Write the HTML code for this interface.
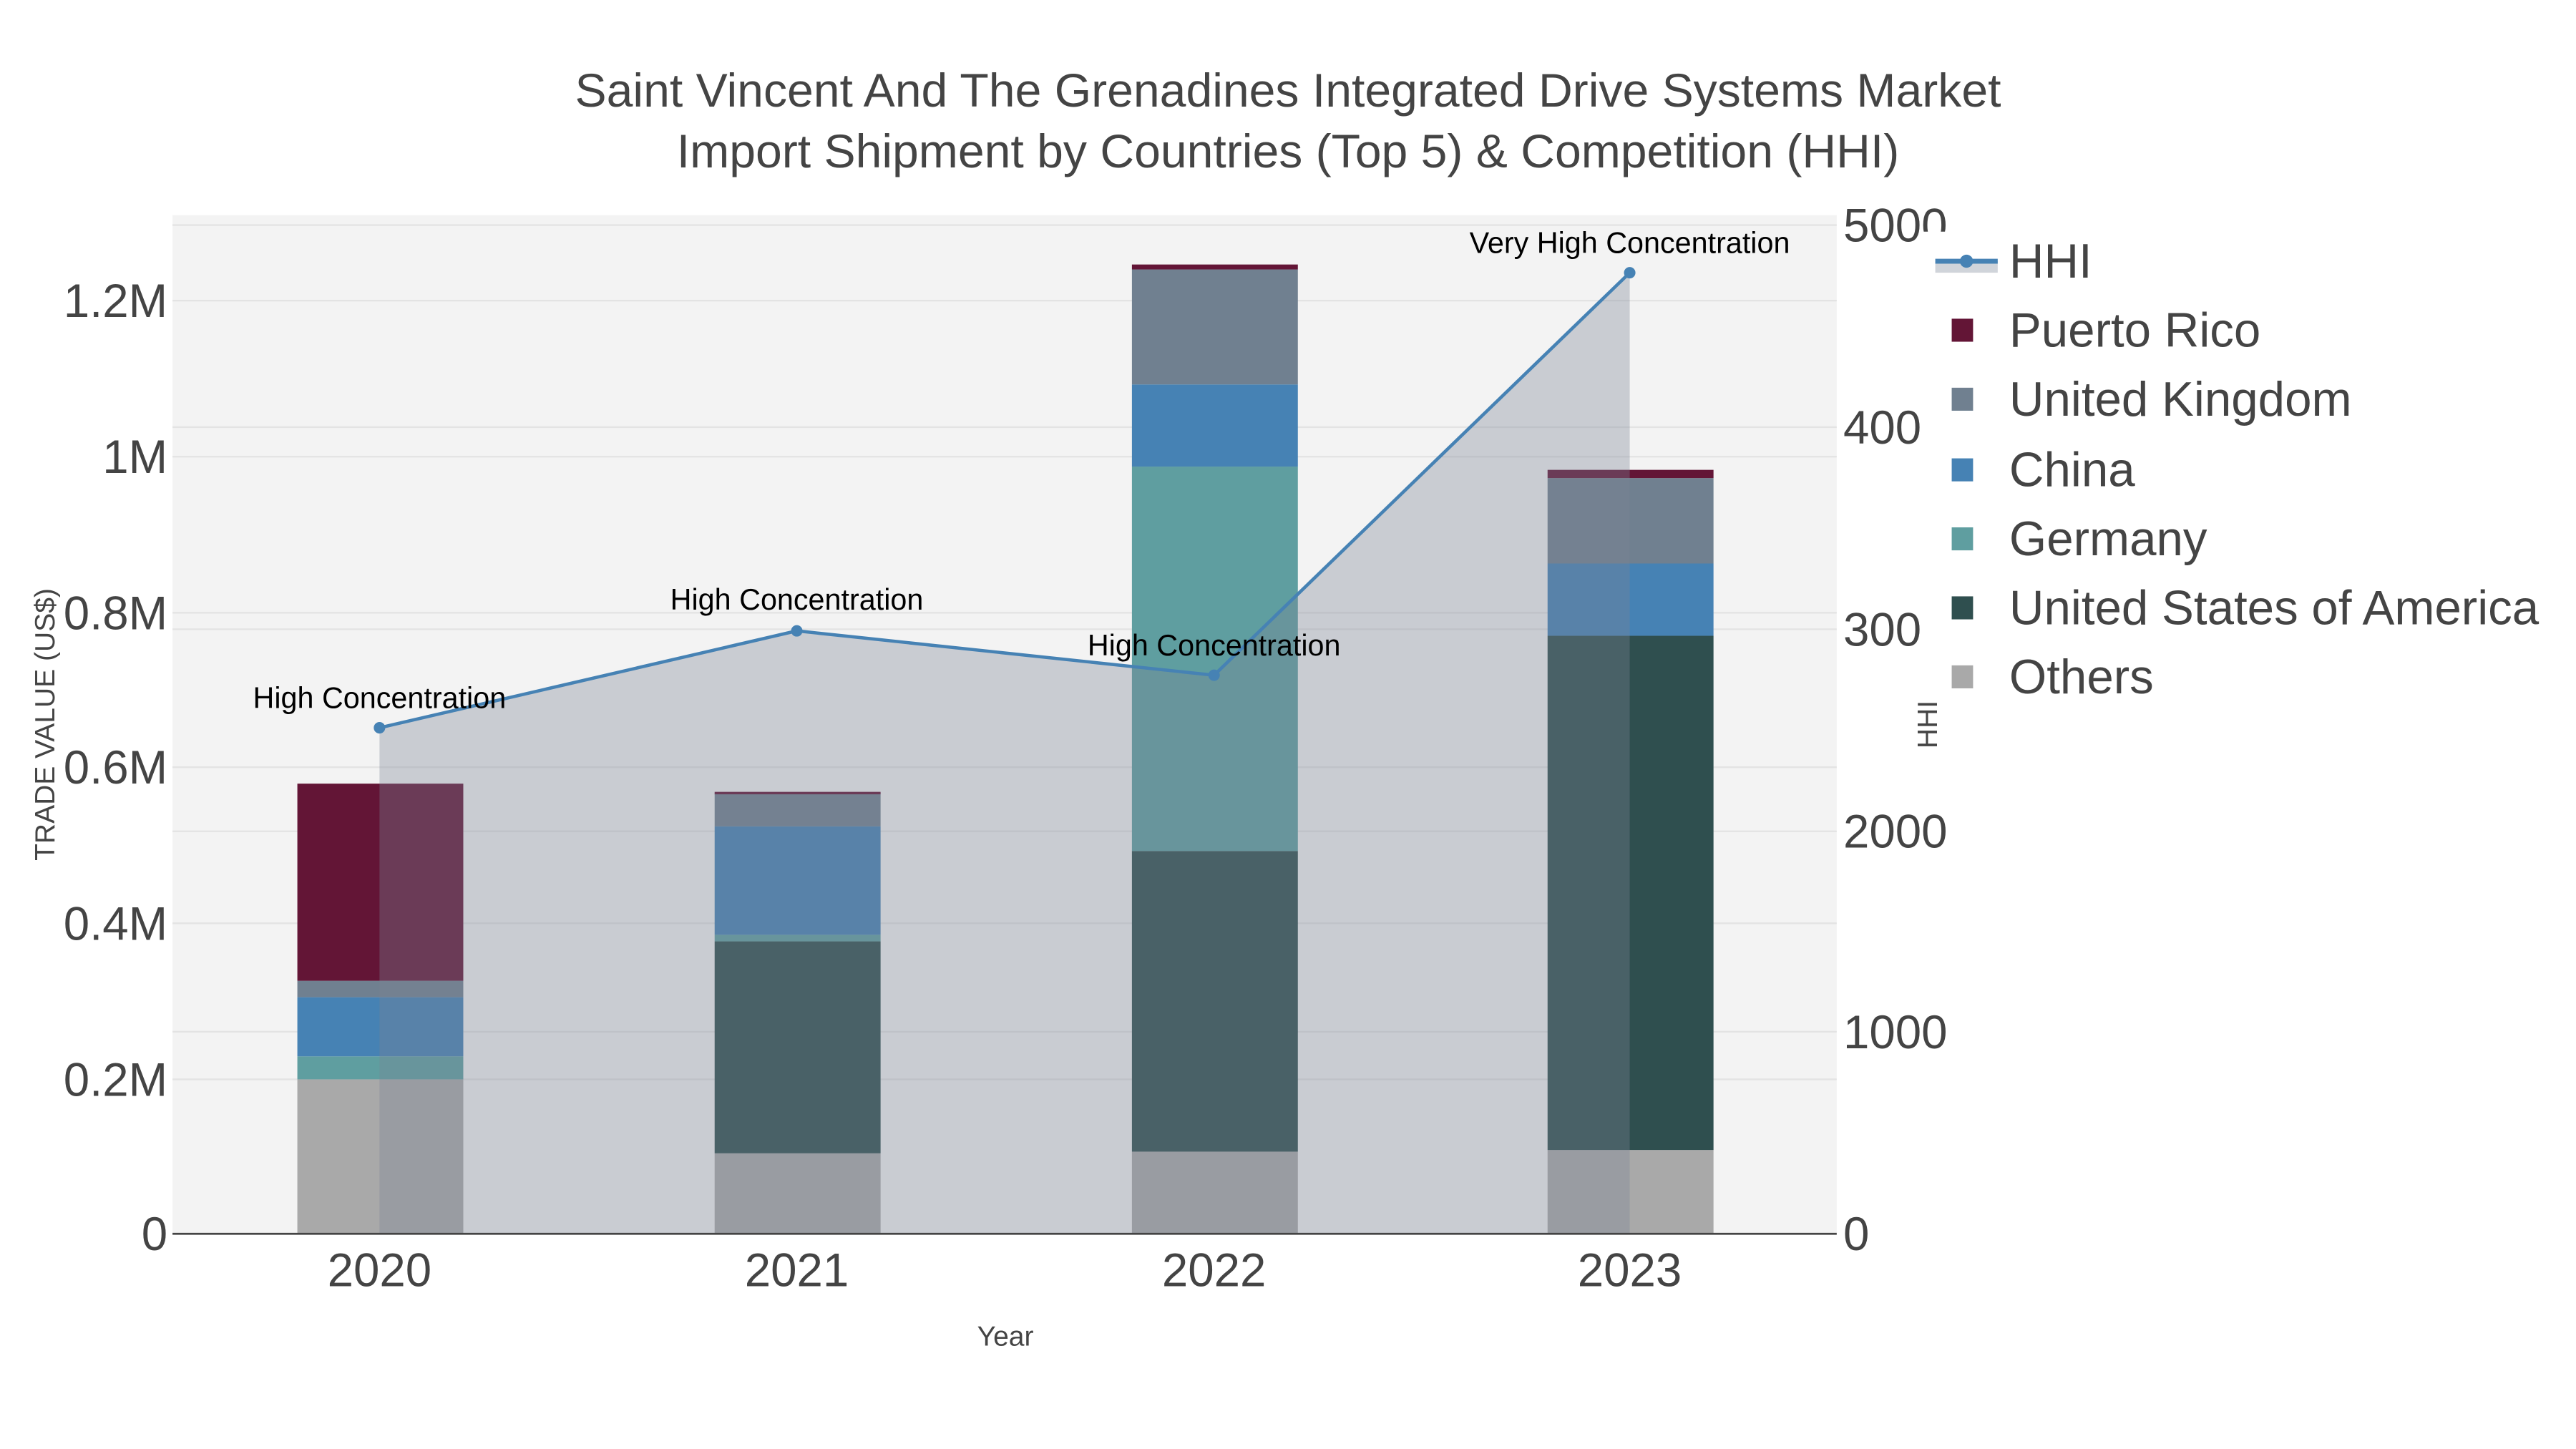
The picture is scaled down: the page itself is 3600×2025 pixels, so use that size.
<!DOCTYPE html>
<html><head><meta charset="utf-8"><style>html,body{margin:0;padding:0;background:#fff}svg{display:block}</style></head>
<body>
<svg width="3600" height="2025" viewBox="0 0 1568 882" preserveAspectRatio="none" xmlns="http://www.w3.org/2000/svg" font-family="Liberation Sans, sans-serif">
<rect x="0" y="0" width="1568" height="882" fill="#fff"/>
<rect x="105" y="131" width="1013" height="620" fill="#f3f3f3"/>
<g stroke="#e3e3e3" stroke-width="1">
<line x1="105" x2="1118" y1="657" y2="657"/><line x1="105" x2="1118" y1="562" y2="562"/>
<line x1="105" x2="1118" y1="467" y2="467"/><line x1="105" x2="1118" y1="373" y2="373"/>
<line x1="105" x2="1118" y1="278" y2="278"/><line x1="105" x2="1118" y1="183" y2="183"/>
<line x1="105" x2="1118" y1="628" y2="628"/><line x1="105" x2="1118" y1="506" y2="506"/>
<line x1="105" x2="1118" y1="383" y2="383"/><line x1="105" x2="1118" y1="260" y2="260"/>
<line x1="105" x2="1118" y1="137" y2="137"/>
</g>
<rect x="181" y="657" width="101" height="94" fill="#a9a9a9"/>
<rect x="181" y="643" width="101" height="14" fill="#5f9ea0"/>
<rect x="181" y="607" width="101" height="36" fill="#4682b4"/>
<rect x="181" y="597" width="101" height="10" fill="#708090"/>
<rect x="181" y="477" width="101" height="120" fill="#631536"/>
<rect x="435" y="702" width="101" height="49" fill="#a9a9a9"/>
<rect x="435" y="573" width="101" height="129" fill="#2f4f4f"/>
<rect x="435" y="569" width="101" height="4" fill="#5f9ea0"/>
<rect x="435" y="503" width="101" height="66" fill="#4682b4"/>
<rect x="435" y="483" width="101" height="20" fill="#708090"/>
<rect x="435" y="482" width="101" height="1.5" fill="#631536"/>
<rect x="689" y="701" width="101" height="50" fill="#a9a9a9"/>
<rect x="689" y="518" width="101" height="183" fill="#2f4f4f"/>
<rect x="689" y="284" width="101" height="234" fill="#5f9ea0"/>
<rect x="689" y="234" width="101" height="50" fill="#4682b4"/>
<rect x="689" y="164" width="101" height="70" fill="#708090"/>
<rect x="689" y="161" width="101" height="3" fill="#631536"/>
<rect x="942" y="700" width="101" height="51" fill="#a9a9a9"/>
<rect x="942" y="387" width="101" height="313" fill="#2f4f4f"/>
<rect x="942" y="343" width="101" height="44" fill="#4682b4"/>
<rect x="942" y="291" width="101" height="52" fill="#708090"/>
<rect x="942" y="286" width="101" height="5" fill="#631536"/>
<polygon points="231,443 485,384 739,411 992,166 992,751 231,751" fill="rgba(122,131,148,0.35)"/>
<line x1="105" x2="1118" y1="751" y2="751" stroke="#444" stroke-width="1.2"/>
<polyline points="231,443 485,384 739,411 992,166" fill="none" stroke="#4682b4" stroke-width="2"/>
<g fill="#4682b4"><circle cx="231" cy="443" r="3.5"/><circle cx="485" cy="384" r="3.5"/><circle cx="739" cy="411" r="3.5"/><circle cx="992" cy="166" r="3.5"/></g>
<g font-size="18" fill="#000" text-anchor="middle">
<text x="231" y="431">High Concentration</text>
<text x="485" y="371">High Concentration</text>
<text x="739" y="399">High Concentration</text>
<text x="992" y="154">Very High Concentration</text>
</g>
<g font-size="28.8" fill="#444" text-anchor="middle">
<text x="784" y="65">Saint Vincent And The Grenadines Integrated Drive Systems Market</text>
<text x="784" y="102">Import Shipment by Countries (Top 5) &amp; Competition (HHI)</text>
</g>
<g font-size="28.5" fill="#444" text-anchor="end">
<text x="102" y="761">0</text><text x="102" y="667">0.2M</text><text x="102" y="572">0.4M</text>
<text x="102" y="477">0.6M</text><text x="102" y="383">0.8M</text><text x="102" y="288">1M</text><text x="102" y="193">1.2M</text>
</g>
<g font-size="28.5" fill="#444">
<text x="1122" y="761">0</text><text x="1122" y="638">1000</text><text x="1122" y="516">2000</text>
<text x="1122" y="393">3000</text><text x="1122" y="270">4000</text><text x="1122" y="147">5000</text>
</g>
<g font-size="28.5" fill="#444" text-anchor="middle">
<text x="231" y="783">2020</text><text x="485" y="783">2021</text><text x="739" y="783">2022</text><text x="992" y="783">2023</text>
</g>
<text x="612" y="819" font-size="17" fill="#444" text-anchor="middle">Year</text>
<text transform="translate(33,441) rotate(-90)" font-size="17" fill="#444" text-anchor="middle">TRADE VALUE (US$)</text>
<rect x="1170" y="141" width="398" height="290" fill="#fff"/>
<text transform="translate(1179,441) rotate(-90)" font-size="17" fill="#444" text-anchor="middle">HHI</text>
<rect x="1178" y="159" width="38" height="7" fill="#d0d4da"/>
<line x1="1178" x2="1216" y1="159" y2="159" stroke="#4682b4" stroke-width="3"/>
<circle cx="1197" cy="159" r="4" fill="#4682b4"/>
<rect x="1188" y="194" width="13" height="14" fill="#631536"/>
<rect x="1188" y="236" width="13" height="14" fill="#708090"/>
<rect x="1188" y="279" width="13" height="14" fill="#4682b4"/>
<rect x="1188" y="321" width="13" height="14" fill="#5f9ea0"/>
<rect x="1188" y="363" width="13" height="14" fill="#2f4f4f"/>
<rect x="1188" y="405" width="13" height="14" fill="#a9a9a9"/>
<g font-size="29.3" fill="#444">
<text x="1223" y="169">HHI</text><text x="1223" y="211">Puerto Rico</text><text x="1223" y="253">United Kingdom</text>
<text x="1223" y="296">China</text><text x="1223" y="338">Germany</text><text x="1223" y="380">United States of America</text><text x="1223" y="422">Others</text>
</g>
</svg>
</body></html>
